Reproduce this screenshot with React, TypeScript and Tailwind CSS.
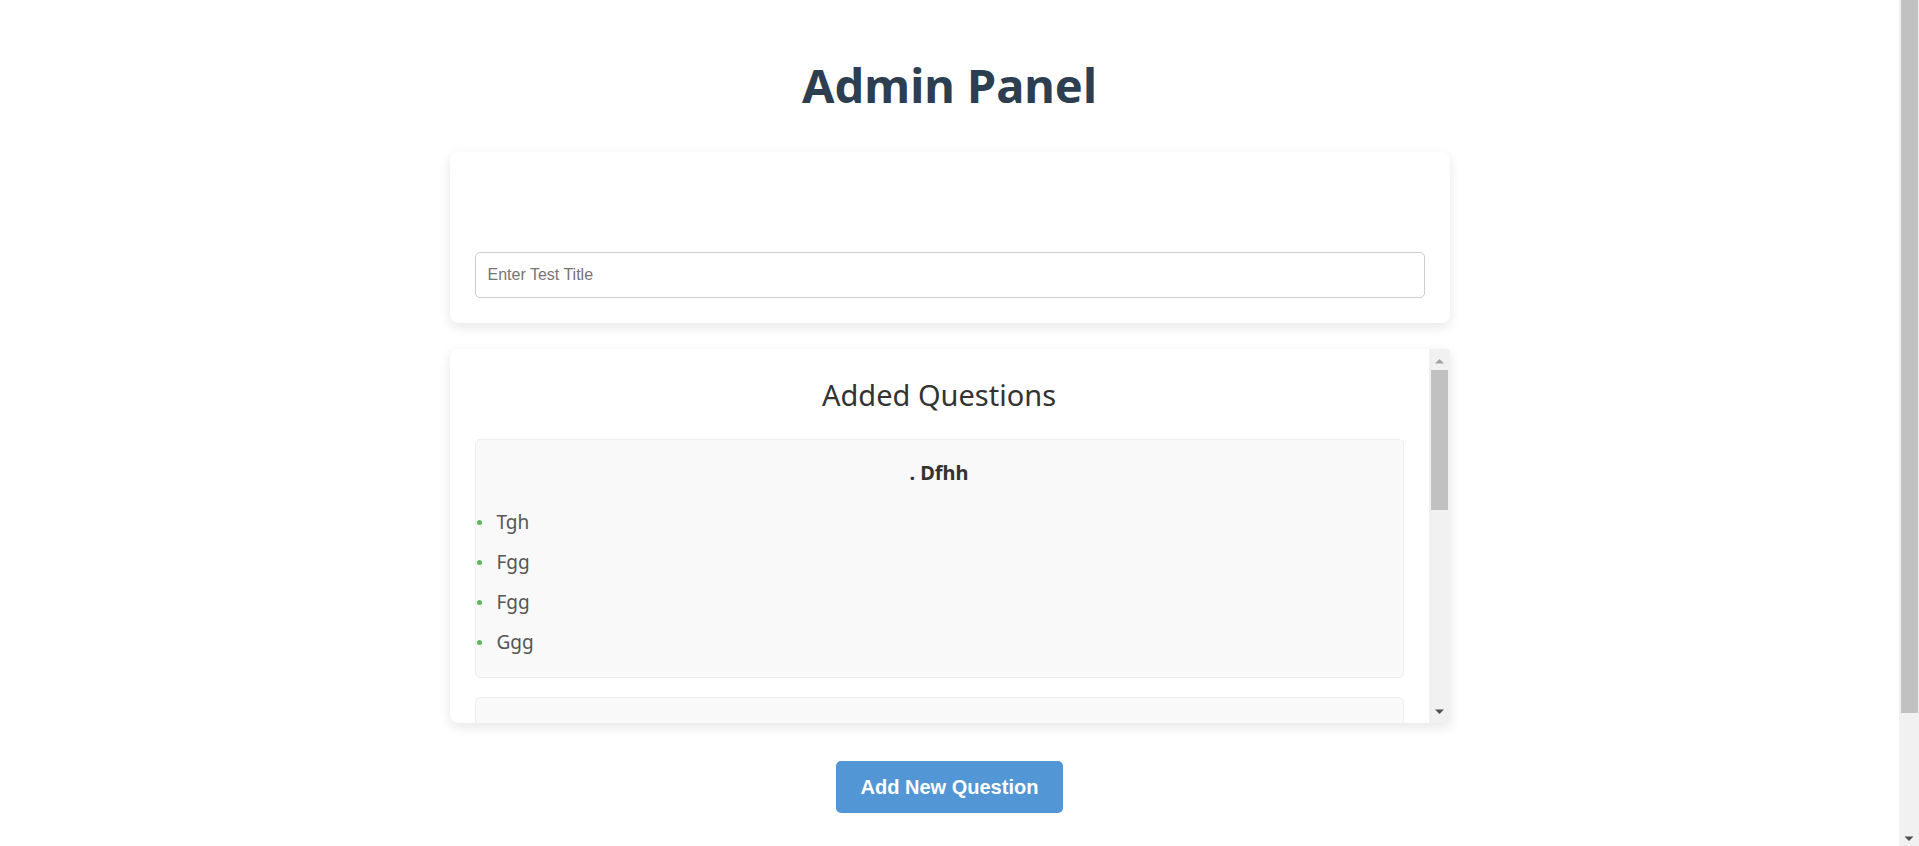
import React from "react";

type Question = { title: string; options: string[] };

const questions: Question[] = [
  { title: ". Dfhh", options: ["Tgh", "Fgg", "Fgg", "Ggg"] },
  { title: ". Hjkk", options: ["Rty", "Ghj", "Vbn", "Yui"] },
  { title: ". Qwer", options: ["Asd", "Zxc", "Dfg", "Cvb"] },
];

function Arrow({
  points,
  color,
  w,
  h,
}: {
  points: string;
  color: string;
  w: number;
  h: number;
}) {
  return (
    <svg width={w} height={h} viewBox={`0 0 ${w} ${h}`} className="block">
      <polygon points={points} fill={color} />
    </svg>
  );
}

function QuestionBox({ q }: { q: Question }) {
  return (
    <div className="mb-[19px] rounded-[5px] border border-[#eeeeee] bg-[#f9f9f9] pt-[21px] pb-[15px]">
      <h3 className="mb-[17px] text-center text-[20px] font-bold leading-[24px] text-[#333333]">
        {q.title}
      </h3>
      <ul>
        {q.options.map((o, i) => (
          <li
            key={i}
            className="flex items-center py-[6px] text-[19px] leading-[28px] text-[#555555]"
          >
            <span className="ml-[1px] h-[5px] w-[5px] shrink-0 rounded-full bg-[#5cb85c]" />
            <span className="ml-[15px]">{o}</span>
          </li>
        ))}
      </ul>
    </div>
  );
}

export default function App() {
  return (
    <div className="flex h-screen overflow-hidden bg-white font-['Segoe_UI','Noto_Sans',sans-serif]">
      <div className="min-w-0 flex-1 overflow-hidden">
        <div className="mx-auto max-w-[1000px] pt-[57px] pb-[167px]">
          <h1 className="mb-[39px] text-center text-[47px] font-bold leading-[56px] text-[#2c3e50]">
            Admin Panel
          </h1>

          <div className="rounded-[8px] bg-white p-[25px] shadow-[0_4px_12px_rgba(0,0,0,0.1)]">
            <div className="h-[75px]" />
            <input
              type="text"
              placeholder="Enter Test Title"
              className="block h-[46px] w-full rounded-[5px] border border-[#cccccc] bg-white px-[12px] font-['Liberation_Sans',Arial,sans-serif] text-[16px] text-[#333333] outline-none placeholder:text-[#757575]"
            />
          </div>

          <div className="mt-[26px] flex h-[374px] overflow-hidden rounded-l-[8px] rounded-r-[3px] bg-white shadow-[0_4px_12px_rgba(0,0,0,0.1)]">
            <div className="min-w-0 flex-1 overflow-hidden p-[25px]">
              <h2 className="mt-[4px] mb-[27px] text-center text-[29px] font-normal leading-[34px] text-[#333333]">
                Added Questions
              </h2>
              {questions.map((q, i) => (
                <QuestionBox key={i} q={q} />
              ))}
            </div>
            <div className="flex w-[21px] shrink-0 flex-col bg-[#f1f1f1]">
              <div className="h-[21px]">
                <Arrow w={21} h={21} points="6,14.5 15,14.5 10.5,10" color="#a3a3a3" />
              </div>
              <div className="mx-[2px] h-[140px] bg-[#c1c1c1]" />
              <div className="flex-1" />
              <div className="h-[21px]">
                <Arrow w={21} h={21} points="6,7.5 15,7.5 10.5,12" color="#505050" />
              </div>
            </div>
          </div>

          <div className="mt-[38px] flex justify-center">
            <button
              type="button"
              className="h-[52px] rounded-[5px] bg-[#5296d5] px-[25px] font-['Liberation_Sans',Arial,sans-serif] text-[20px] font-bold text-white"
            >
              Add New Question
            </button>
          </div>
        </div>
      </div>

      <div className="flex w-[20px] shrink-0 flex-col bg-[#f1f1f1]">
        <div className="ml-[2px] mr-[1px] h-[713px] bg-[#c1c1c1]" />
        <div className="flex-1" />
        <div className="h-[20px]">
          <Arrow w={20} h={20} points="5.5,10.5 14.5,10.5 10,15" color="#505050" />
        </div>
      </div>
    </div>
  );
}
